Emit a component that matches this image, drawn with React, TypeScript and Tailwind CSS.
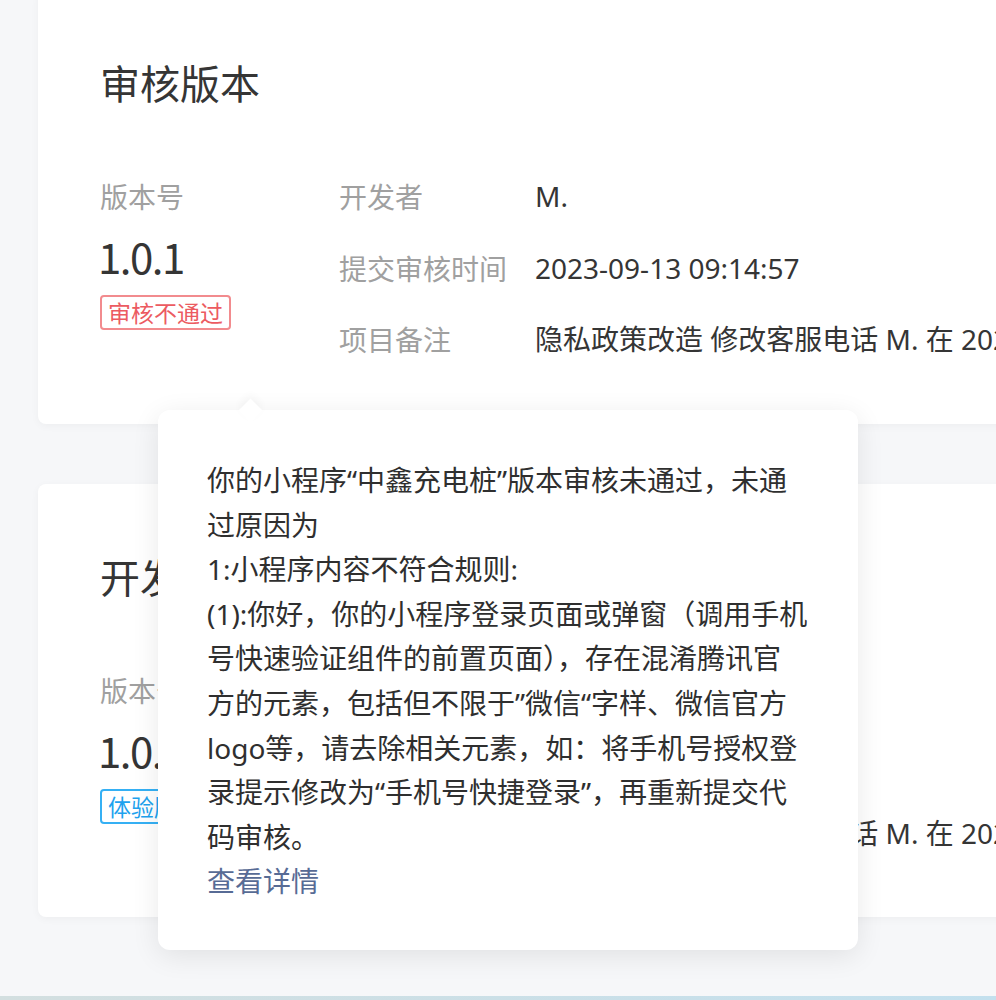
const cjk = "font-['Noto_Sans_CJK_SC',sans-serif]";
const mixed = "font-['Noto_Sans','Noto_Sans_CJK_SC',sans-serif]";

type Row = { label: string; value: string };

const auditRows: Row[] = [
  { label: '开发者', value: 'M.' },
  { label: '提交审核时间', value: '2023-09-13 09:14:57' },
  { label: '项目备注', value: '隐私政策改造 修改客服电话 M. 在 2023-09-13 09:14:57 提交审核' }
];

const devRows: Row[] = [
  { label: '开发者', value: 'M.' },
  { label: '提交时间', value: '2023-09-13 09:10:21' },
  { label: '项目备注', value: '隐私政策改造 修改客服电话 M. 在 2023-09-13 09:10:21 上传' }
];

const reason = [
  '你的小程序“中鑫充电桩”版本审核未通过，未通',
  '过原因为',
  '1:小程序内容不符合规则:',
  '(1):你好，你的小程序登录页面或弹窗（调用手机',
  '号快速验证组件的前置页面），存在混淆腾讯官',
  '方的元素，包括但不限于”微信“字样、微信官方',
  'logo等，请去除相关元素，如：将手机号授权登',
  '录提示修改为“手机号快捷登录”，再重新提交代',
  '码审核。'
];

export default function App() {
  return (
    <div className={`relative h-[1000px] overflow-hidden bg-[#f6f7f9] flex flex-col ${cjk}`}>
      <div className="pl-[38px] flex flex-col gap-[60px]">
        <VersionCard
          className="mt-[-10px] h-[434px]"
          title="审核版本"
          version="1.0.1"
          badge={
            <span className="inline-flex items-center h-[35px] px-[6px] border-2 border-[#f28b8e] rounded-[4px] text-[23px] leading-none text-[#ec5b61]">
              审核不通过
            </span>
          }
          rows={auditRows}
        />
        <VersionCard
          className="h-[433px]"
          title="开发版本"
          version="1.0.2"
          badge={
            <span className="inline-flex items-center h-[35px] px-[6px] border-2 border-[#35b0f4] rounded-[4px] text-[23px] leading-none text-[#1da2ee]">
              体验版
            </span>
          }
          rows={devRows}
        />
      </div>

      <div className="mt-auto h-[4px] bg-linear-to-r from-[#d3dfe0] to-[#c3e0ee]" />

      {/* reject reason popover */}
      <div className="absolute left-[158px] top-[410px] w-[700px] h-[540px] bg-white rounded-[12px] shadow-[0_6px_28px_rgba(0,0,0,0.09)]">
        <div className="absolute left-[84px] top-[-8px] w-[17px] h-[17px] bg-white rotate-45 shadow-[-3px_-3px_8px_rgba(0,0,0,0.04)]" />
        <div className={`relative pl-[49px] pt-[48px] text-[28px] leading-[44.6px] text-[#2f2f2f] whitespace-nowrap ${mixed}`}>
          {reason.map((line, i) => (
            <div key={i}>{line}</div>
          ))}
          <div className="text-[#576b95]">查看详情</div>
        </div>
      </div>
    </div>
  );
}

function VersionCard({
  className,
  title,
  version,
  badge,
  rows
}: {
  className: string;
  title: string;
  version: string;
  badge: React.ReactNode;
  rows: Row[];
}) {
  return (
    <div className={`w-[1000px] bg-white rounded-[8px] shadow-[0_2px_8px_rgba(0,0,0,0.04)] pl-[62px] pt-[72px] ${className}`}>
      <div className="text-[40px] leading-[40px] text-[#353535]">{title}</div>
      <div className="mt-[80px] flex">
        <div className="w-[239px] shrink-0 flex flex-col items-start">
          <div className="text-[28px] leading-[28px] text-[#a0a0a0]">版本号</div>
          <div className="mt-[22px] ml-[-2px] text-[42px] leading-[48px] text-[#353535] tracking-[-1.5px]">{version}</div>
          <div className="mt-[15px]">{badge}</div>
        </div>
        <div className="grid grid-cols-[196px_1fr] gap-y-[43.5px] text-[28px] leading-[28px] whitespace-nowrap">
          {rows.map((r) => (
            <div key={r.label} className="contents">
              <div className="text-[#a0a0a0]">{r.label}</div>
              <div className={`text-[#353535] ${mixed}`}>{r.value}</div>
            </div>
          ))}
        </div>
      </div>
    </div>
  );
}
